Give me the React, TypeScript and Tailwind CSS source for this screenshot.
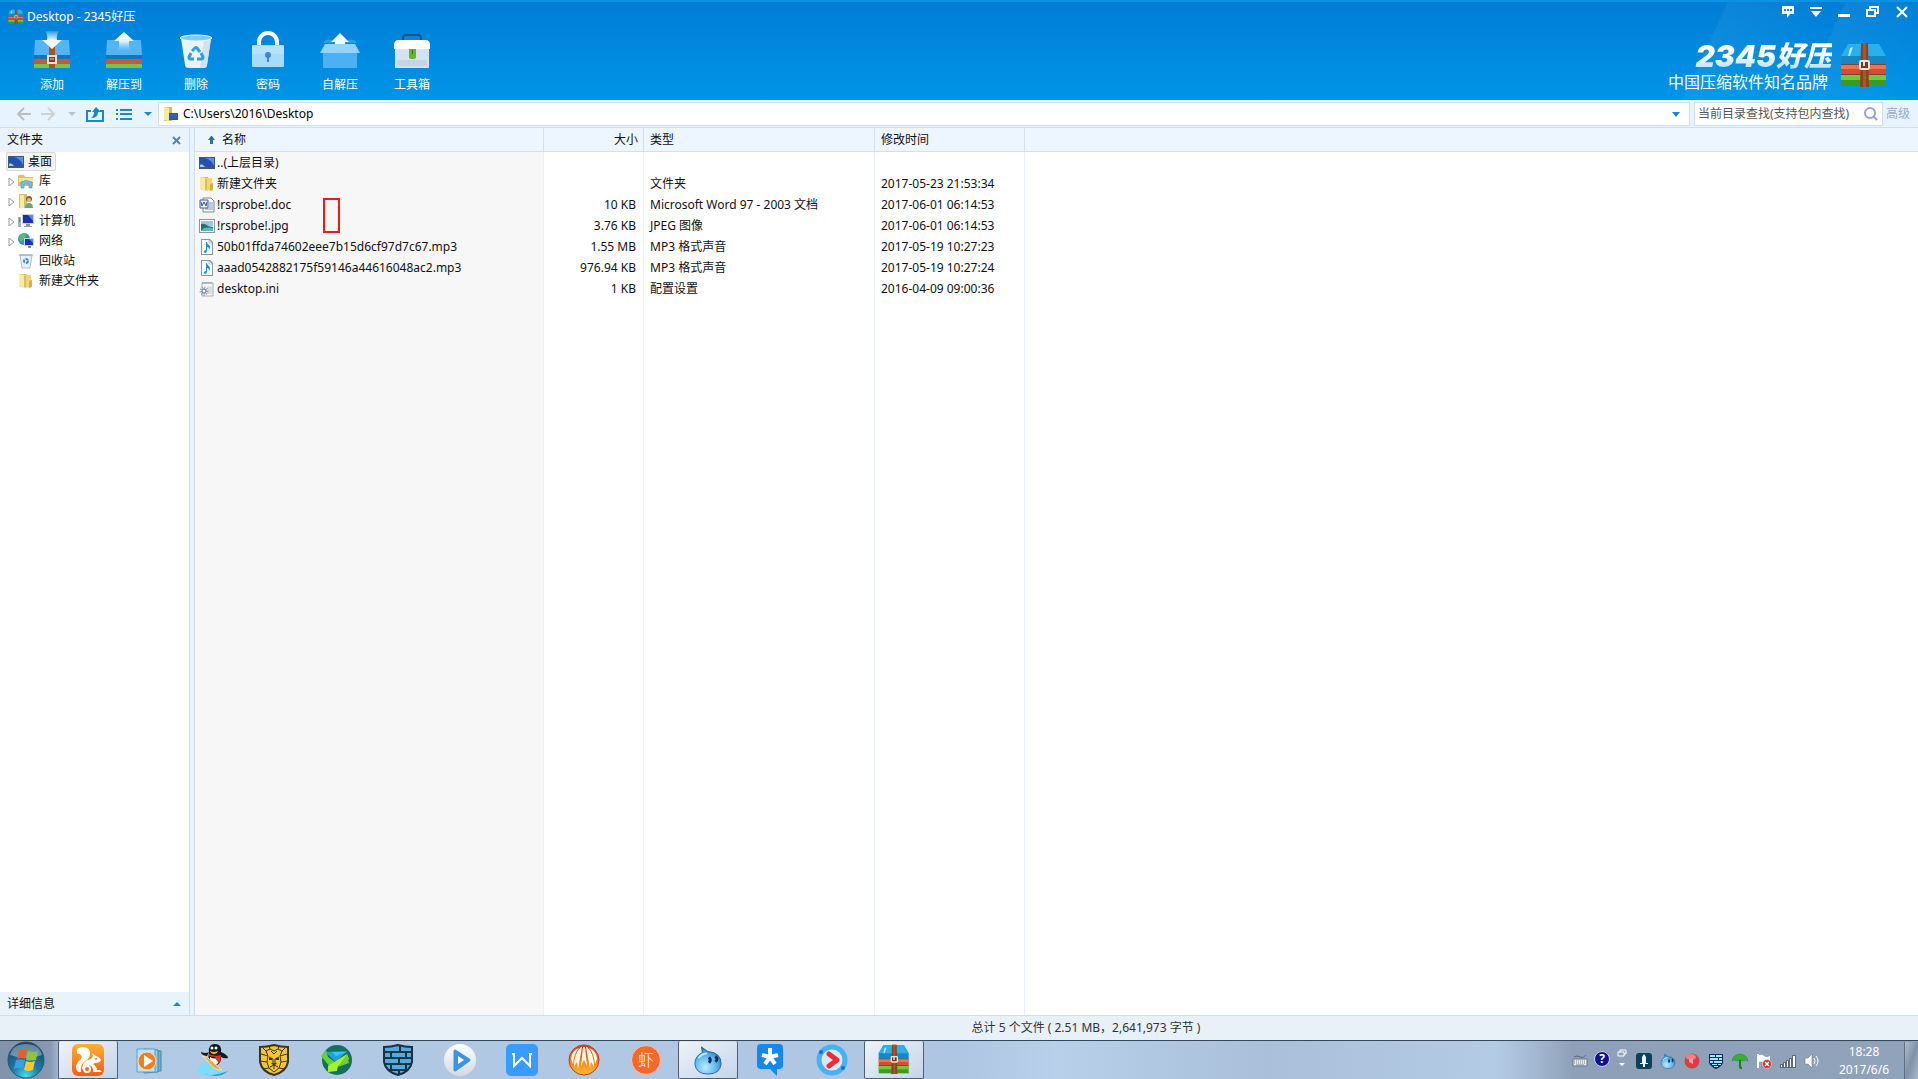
import { useState } from 'react'
import type { ReactNode } from 'react'

/* ---------- Toolbar icons ---------- */

function AddIcon() {
  return (
    <svg width="38" height="40" viewBox="0 0 38 40">
      <defs>
        <linearGradient id="addArrow" x1="0" y1="0" x2="0" y2="1">
          <stop offset="0" stopColor="#fff" stopOpacity="0.15" />
          <stop offset="0.5" stopColor="#e8f6ff" />
          <stop offset="1" stopColor="#fff" />
        </linearGradient>
      </defs>
      <path d="M2 10h34l1 15H1z" fill="#54b4f4" />
      <path d="M1 25h36v4H1z" fill="#0f78bd" />
      <path d="M1 29h36v5H1z" fill="#c7583c" />
      <path d="M1 34h36v4H1z" fill="#7fc241" />
      <path d="M16 16h6v22h-6z" fill="#a9531d" />
      <path d="M15 26h8v7h-8z" fill="#7d3c1c" stroke="#e5e1dc" strokeWidth="2" />
      <path d="M17 29h4" stroke="#e5e1dc" />
      <path d="M12 1h14q-3 4-2 9h5L19 19 9 10h5q1-5-2-9z" fill="url(#addArrow)" />
    </svg>
  )
}

function ExtractIcon() {
  return (
    <svg width="38" height="40" viewBox="0 0 38 40">
      <defs>
        <linearGradient id="extArrow" x1="0" y1="0" x2="0" y2="1">
          <stop offset="0" stopColor="#fff" />
          <stop offset="0.5" stopColor="#dff2ff" />
          <stop offset="1" stopColor="#8fd0fa" stopOpacity="0" />
        </linearGradient>
      </defs>
      <path d="M2 10h34l1 15H1z" fill="#54b4f4" />
      <path d="M1 25h36v4H1z" fill="#0f78bd" />
      <path d="M1 29h36v5H1z" fill="#c7583c" />
      <path d="M1 34h36v4H1z" fill="#7fc241" />
      <path d="M19 2l10 9h-5v4q0 4 3 6H11q3-2 3-6v-4H9z" fill="url(#extArrow)" />
    </svg>
  )
}

function DeleteIcon() {
  return (
    <svg width="38" height="40" viewBox="0 0 38 40">
      <path d="M4 8h30l-4 27q0 3-4 3H12q-4 0-4-3z" fill="#e9f3fa" />
      <path d="M27 9h7l-4 26q0 3-4 3h-3z" fill="#d3e2ed" />
      <ellipse cx="19" cy="8" rx="16" ry="3" fill="#7fcdf5" stroke="#eaf7ff" />
      <g fill="none" stroke="#2e9fe2" strokeWidth="3">
        <path d="M15 21l3-3q1-1 2 0l3 4" />
        <path d="M24 23l2 4q0 2-2 2h-4" />
        <path d="M14 23l-2 4q0 2 2 2h3" />
      </g>
    </svg>
  )
}

function LockIcon() {
  return (
    <svg width="38" height="40" viewBox="0 0 38 40">
      <path d="M10 17v-5a9 9 0 0 1 18 0v5" fill="none" stroke="#fff" strokeWidth="4" />
      <rect x="3" y="15" width="32" height="22" rx="1" fill="#a6dbfb" />
      <path d="M3 16h32v8H3z" fill="#b7e2fc" />
      <circle cx="19" cy="25" r="3" fill="#3f86cf" />
      <path d="M18 26h2v6h-2z" fill="#3f86cf" />
    </svg>
  )
}

function SfxIcon() {
  return (
    <svg width="40" height="40" viewBox="0 0 40 40">
      <path d="M3 13q3-5 9-3h16q6-2 9 3z" fill="#2d9de6" />
      <path d="M20 3l9 9h-4v6H15v-6h-4z" fill="#f2faff" />
      <path d="M3 22h34v16H3z" fill="#4cb0f3" />
      <path d="M5 14h30l5 9H0z" fill="#95d3fb" />
    </svg>
  )
}

function ToolboxIcon() {
  return (
    <svg width="38" height="40" viewBox="0 0 38 40">
      <path d="M10 11V8q0-3 3-3h12q3 0 3 3v3" fill="none" stroke="#20558a" strokeWidth="2" />
      <path d="M2 18h34v20H2z" fill="#d5e2f2" />
      <path d="M1 19v-4q0-5 5-5h26q5 0 5 5v4z" fill="#fff" />
      <path d="M4 31h30M4 33h30M4 35h30" stroke="#b3c5da" />
      <path d="M16 19h7v8q0 2-2 2h-3q-2 0-2-2z" fill="#67b32e" />
      <path d="M19 20h1v4h-1z" fill="#35701a" />
    </svg>
  )
}

function ArchiveIcon({ size }: { size: number }) {
  return (
    <svg width={size} height={size} viewBox="0 0 48 48">
      <path d="M8 2h31l7 12v9H1v-9z" fill="#1787c4" />
      <path d="M8 2h31l7 12H1z" fill="#29b0ee" />
      <path d="M1 23h45v10H1z" fill="#d64c2e" />
      <path d="M1 23h45v4H1z" fill="#f07350" />
      <path d="M1 33h45v11H1z" fill="#3c9a24" />
      <path d="M1 33h45v5H1z" fill="#72c83a" />
      <path d="M1 32h45v1H1zM1 22h45v1H1z" fill="#7a4334" />
      <path d="M21 1h7l1 44h-9z" fill="#8c4320" />
      <path d="M23 1h3v44h-3z" fill="#a9562c" />
      <rect x="20" y="19" width="9" height="8" rx="1" fill="#7a3818" stroke="#e9e4dc" strokeWidth="2" />
      <path d="M24 19v5" stroke="#e9e4dc" strokeWidth="2" />
      <path d="M10 6l3-1-3 9H8z" fill="#b6e8fd" />
    </svg>
  )
}

/* ---------- File icons, 16px ---------- */

function DesktopIcon() {
  return (
    <svg width="16" height="14" viewBox="0 0 16 14">
      <path d="M0 1h16v12H0z" fill="#3e5876" />
      <path d="M1 2h14v9H1z" fill="#2450ae" />
      <path d="M6 2h9v8Q13 4 6 2z" fill="#5a8de6" />
      <path d="M1 9q2-2 5 2H1z" fill="#a9c9ea" />
    </svg>
  )
}

function FolderIcon() {
  return (
    <svg width="16" height="16" viewBox="0 0 16 16">
      <path d="M2 1h7v13H2z" fill="#d9bb56" />
      <path d="M6 2l7 0v12l-7 1z" fill="#edd578" />
      <path d="M1 1l5 1v13l-5-2z" fill="#f8e9a4" />
      <path d="M7 3v11" stroke="#c9a640" />
      <path d="M11 8l3-1v7l-3 1z" fill="#d5b044" />
    </svg>
  )
}

function LibraryIcon() {
  return (
    <svg width="16" height="16" viewBox="0 0 16 16">
      <path d="M0 3l1-1h5l1 2h8v9H0z" fill="#dfc25a" />
      <path d="M1 5h14v4H1z" fill="#f7e59a" />
      <path d="M3 9q5-3 11 0v6h-3v-4H6v4H3z" fill="#6cc3ea" stroke="#3f8fbf" strokeWidth="0.6" />
    </svg>
  )
}

function UserFolderIcon() {
  return (
    <svg width="16" height="16" viewBox="0 0 16 16">
      <path d="M1 1h8v14H1z" fill="#dcc066" />
      <path d="M2 2h4v13H2z" fill="#f8e9a4" />
      <circle cx="11" cy="6" r="3" fill="#7d5a3a" />
      <circle cx="11" cy="7" r="2" fill="#e7b98e" />
      <path d="M7 15q0-5 4-5t4 5z" fill="#68a67c" />
    </svg>
  )
}

function ComputerIcon() {
  return (
    <svg width="16" height="16" viewBox="0 0 16 16">
      <path d="M0 4h3v10H0z" fill="#a9b2ba" />
      <path d="M1 5h1v4H1z" fill="#5d9c4a" />
      <path d="M4 1h12v10H4z" fill="#cdd3da" />
      <path d="M5 2h10v8H5z" fill="#1a2fb4" />
      <path d="M10 2h5v6z" fill="#5f86f0" />
      <path d="M8 11h4v2h2v1H6v-1h2z" fill="#8e98a3" />
    </svg>
  )
}

function NetworkIcon() {
  return (
    <svg width="16" height="16" viewBox="0 0 16 16">
      <circle cx="6" cy="6" r="6" fill="#2f8fd6" />
      <path d="M2 2q4-3 6 0L6 6l-3 3-2-3zM7 7h3l-2 4z" fill="#55c06a" />
      <path d="M6 5h10v8H6z" fill="#c8d4e2" />
      <path d="M7 6h8v6H7z" fill="#1632b5" />
      <path d="M11 6h4v4z" fill="#5a88ef" />
      <path d="M10 13h3v2h-3z" fill="#7f8a96" />
    </svg>
  )
}

function RecycleIcon() {
  return (
    <svg width="16" height="16" viewBox="0 0 16 16">
      <path d="M2 2h12l-2 13H4z" fill="#e6f0f7" stroke="#a9bccb" />
      <path d="M1 2h14" stroke="#93aabd" />
      <circle cx="8" cy="8" r="2" fill="none" stroke="#3b8ed6" strokeWidth="2" strokeDasharray="3 1" />
    </svg>
  )
}

function WordIcon() {
  return (
    <svg width="16" height="16" viewBox="0 0 16 16">
      <path d="M4 1h8l3 3v11H4z" fill="#fff" stroke="#7b8697" />
      <path d="M10 6h4M10 8h4M10 10h4M6 12h8" stroke="#7e93c8" />
      <path d="M1 3h8v8H1z" fill="#eef2fb" stroke="#3d5ba9" />
      <path d="M2 5l1 4 2-4 2 4 1-4" fill="none" stroke="#2f4f9f" />
    </svg>
  )
}

function ImageIcon() {
  return (
    <svg width="16" height="14" viewBox="0 0 16 14">
      <path d="M0 0h16v14H0z" fill="#8c969e" />
      <path d="M1 1h14v12H1z" fill="#fff" />
      <path d="M2 2h12v5H2z" fill="#8ccbee" />
      <path d="M2 5q4-1 7 2l5 1v4H2z" fill="#27736c" />
      <path d="M5 9q5-1 9 0v3H2z" fill="#5fb5c9" />
    </svg>
  )
}

function MusicIcon() {
  return (
    <svg width="16" height="16" viewBox="0 0 16 16">
      <path d="M2 0h9l3 3v13H2z" fill="#8b959d" />
      <path d="M3 1h7l3 3v11H3z" fill="#fff" />
      <path d="M10 1v3h3" fill="none" stroke="#b8c0c6" />
      <path d="M7 3h1q0 2 2 3 2 2 0 5 0-3-2-3v3q0 3-2 3-2-1-1-2t2-1z" fill="#1c8fdc" />
    </svg>
  )
}

function IniIcon() {
  return (
    <svg width="16" height="16" viewBox="0 0 16 16">
      <path d="M3 2h11v13H3z" fill="#f8f9fa" stroke="#a3acb3" />
      <path d="M4 1v2M6 1v2M8 1v2M10 1v2M12 1v2" stroke="#8f989f" />
      <path d="M8 6h5M9 8h4M9 10h4M8 12h5" stroke="#bcc6cd" />
      <circle cx="5" cy="10" r="3" fill="#dfe7ed" stroke="#8fa1b0" strokeWidth="3" strokeDasharray="1 1" />
      <circle cx="5" cy="10" r="2" fill="#eef3f6" stroke="#63798c" />
    </svg>
  )
}

/* ---------- Taskbar icons ---------- */

function StartOrb() {
  return (
    <svg width="38" height="38" viewBox="0 0 38 38">
      <defs>
        <radialGradient id="orb" cx="0.5" cy="0.95" r="0.9">
          <stop offset="0" stopColor="#3fe0f5" />
          <stop offset="0.4" stopColor="#1a7fb0" />
          <stop offset="1" stopColor="#1b4468" />
        </radialGradient>
      </defs>
      <circle cx="19" cy="19" r="18" fill="url(#orb)" stroke="#2a5674" />
      <path d="M3 14Q6 3 19 3t16 11q-16 6-32 0z" fill="#fff" opacity="0.35" />
      <path d="M12 9q4-2 8 0l-2 9q-4-2-8 0z" fill="#ee5b2b" />
      <path d="M21 10q5 2 10 0l-2 9q-6 1-10 0z" fill="#8cc63e" />
      <path d="M9 19q5-1 9 0l-2 9q-5-2-9 0z" fill="#3aa0e6" />
      <path d="M19 20q4 2 9 0l-2 9q-5 2-9 0z" fill="#fbc72e" />
    </svg>
  )
}

function SquirrelIcon() {
  return (
    <svg width="32" height="32" viewBox="0 0 32 32">
      <defs>
        <linearGradient id="uc" x1="0" y1="0" x2="0" y2="1">
          <stop offset="0" stopColor="#ffb12e" />
          <stop offset="1" stopColor="#fb5a14" />
        </linearGradient>
      </defs>
      <rect width="32" height="32" rx="6" fill="url(#uc)" />
      <path d="M9 28H6Q2 23 6 18q3-3 0-7Q2 4 10 3q9 0 8 8-1 4-5 6-5 4-4 11z" fill="#fff" />
      <path d="M4 10q3-1 5 1 2 3-2 6 1-3-3-7z" fill="#fd9226" />
      <path d="M10 24q1-8 9-9l2-3-1-3 4 3q4 1 5 4-1 3-6 3l-2 1q4 3 4 6h3l2 2h-9q1-7-6-7-4 0-4 5z" fill="#fff" />
      <circle cx="15" cy="25" r="3" fill="none" stroke="#fff" strokeWidth="2" />
      <circle cx="24" cy="15" r="1" fill="#fd8424" />
    </svg>
  )
}

function MediaPlayerIcon() {
  return (
    <svg width="32" height="32" viewBox="0 0 32 32">
      <path d="M14 6l13 1v20l-13 1z" fill="#6db0d4" stroke="#4686ab" />
      <path d="M10 5l14 1v22l-14 1z" fill="#96cbe6" stroke="#4686ab" />
      <path d="M3 5h18v23H3z" fill="#bfe2f3" stroke="#5c9fc4" />
      <circle cx="13" cy="17" r="9" fill="#f07f22" stroke="#fbdcb8" />
      <path d="M10 11l9 6-9 6z" fill="#fff" />
    </svg>
  )
}

function PenguinIcon() {
  return (
    <svg width="34" height="34" viewBox="0 0 34 34">
      <path d="M2 28q3-11 14-9l3 6 10 4q-7 5-16 4Q5 33 2 28z" fill="#7fdcf6" />
      <path d="M9 31q8 3 24-3-5 5-13 5z" fill="#1aa5e6" />
      <path d="M12 13q-6-1-6-4 5 2 8 0z" fill="#181818" />
      <path d="M14 9q-1-8 6-8t6 8q7 3 7 6-4 1-7-1 0 10-9 8-5-4-3-13z" fill="#181818" />
      <path d="M15 14q5 3 9 0 1 8-5 8-5-2-4-8z" fill="#fff" />
      <path d="M14 11q6 3 12 1l-1 8q-4-2-5-6l-6-1z" fill="#e23023" />
      <path d="M15 8q4 2 8 0-1 3-4 3t-4-3z" fill="#f9b52a" />
      <circle cx="17" cy="5" r="1.500" fill="#fff" />
      <circle cx="21" cy="5" r="1.500" fill="#fff" />
      <path d="M7 13q5 0 11 6t9 8q-8 0-12-6T7 13z" fill="#f3a33a" stroke="#fbe0a5" />
    </svg>
  )
}

function LionShieldIcon() {
  return (
    <svg width="32" height="34" viewBox="0 0 32 34">
      <path d="M2 4q7 0 14-2 7 2 14 2v15q-2 10-14 13Q4 29 2 19z" fill="#f6c431" stroke="#3a3420" strokeWidth="2" />
      <g fill="none" stroke="#3a3420">
        <path d="M8 8l2 5-1 6 2 6 5 4 5-4 2-6-1-6 2-5-4-2-4 2-4-2z" />
        <path d="M8 8L5 5M12 6l-1-3M20 6l1-3M24 8l3-3M10 13l-7-2M22 13l7-2M9 19l-7-1M23 19l7-1M11 25l-6 1M21 25l6 1" />
        <path d="M13 8l3 3 3-3M11 14l4 2v5M21 14l-4 2v5M12 24l4-2 4 2M16 23v3" />
      </g>
      <path d="M13 20h6l-3 3z" fill="#3a3420" />
      <path d="M11 16h3M18 16h3" stroke="#3a3420" strokeWidth="2" />
    </svg>
  )
}

function GreenBoltIcon() {
  return (
    <svg width="32" height="32" viewBox="0 0 32 32">
      <circle cx="17" cy="16" r="15" fill="#12705e" />
      <path d="M5 8l22-1-11 11z" fill="#1fa0e0" />
      <path d="M12 8h15l-11 4z" fill="#3cc4f2" />
      <path d="M1 12l5-6 2 7 7 5-5 5z" fill="#5fd633" />
      <path d="M8 22l19-12 2 5-11 7-1 5-9 1z" fill="#a5ee34" />
      <path d="M27 10l2 9-11 4z" fill="#72cf28" />
    </svg>
  )
}

function BrickShieldIcon({ size = 32, dark = '#1e2f3d', light = '#4aaee0' }) {
  return (
    <svg width={size} height={size} viewBox="0 0 32 32">
      <path d="M2 3q7 0 14-2 7 2 14 2v15q-2 10-14 13Q4 28 2 18z" fill={light} stroke={dark} strokeWidth="2" />
      <path d="M3 8h26M3 14h26M3 20h26M7 26h18M18 2v6M9 8v6M24 8v6M17 14v6M9 20v6M24 20v5M17 26v4" stroke={dark} strokeWidth="2" />
    </svg>
  )
}

function PlayerIcon() {
  return (
    <svg width="32" height="32" viewBox="0 0 32 32">
      <defs>
        <linearGradient id="disc" x1="0" y1="0" x2="0" y2="1">
          <stop offset="0" stopColor="#fdfefe" />
          <stop offset="1" stopColor="#d3dadf" />
        </linearGradient>
      </defs>
      <circle cx="16" cy="16" r="16" fill="url(#disc)" />
      <path d="M11 7l14 9-14 10z" fill="#3a94e8" stroke="#3a94e8" strokeWidth="3" strokeLinejoin="round" />
      <path d="M14 12l6 4-6 4z" fill="#fff" />
    </svg>
  )
}

function WpsIcon() {
  return (
    <svg width="32" height="32" viewBox="0 0 32 32">
      <rect width="32" height="32" rx="5" fill="#3a9bff" />
      <path d="M6 10h2v12l8-8 8 8V10h2" fill="none" stroke="#fff" strokeWidth="2" />
    </svg>
  )
}

function ShellIcon() {
  return (
    <svg width="32" height="32" viewBox="0 0 32 32">
      <defs>
        <linearGradient id="shell" x1="0" y1="0" x2="0" y2="1">
          <stop offset="0" stopColor="#d63c1c" />
          <stop offset="0.6" stopColor="#f38a1e" />
          <stop offset="1" stopColor="#fbc12e" />
        </linearGradient>
      </defs>
      <circle cx="16" cy="16" r="15" fill="url(#shell)" stroke="#c43a1a" />
      <path d="M16 3l1 0 2 19-3-6-3 6 2-19zM13 3l1 0-4 22-1-7-3 5Q6 9 13 3zM19 3l-1 0 4 22 1-7 3 5Q26 9 19 3zM11 4Q6 9 5 20l-2-5Q3 7 11 4zM21 4q5 5 6 16l2-5Q29 7 21 4z" fill="#fff6e6" />
    </svg>
  )
}

function XiamiIcon() {
  return (
    <span className="flex size-[30px] items-center justify-center rounded-full border border-[#f9c3a6] bg-[#f8682c] text-base leading-none font-light text-white">
      虾
    </span>
  )
}

function DropletIcon({ size }: { size: number }) {
  return (
    <svg width={size} height={size} viewBox="0 0 32 32">
      <defs>
        <radialGradient id="drop" cx="0.4" cy="0.75" r="0.7">
          <stop offset="0" stopColor="#bdeaff" />
          <stop offset="0.6" stopColor="#5db8f0" />
          <stop offset="1" stopColor="#2577c4" />
        </radialGradient>
      </defs>
      <path d="M9 2q4 3 7 5 14 1 14 13-1 11-14 11T2 20Q2 12 10 8z" fill="url(#drop)" stroke="#2468a8" />
      <path d="M6 14q3-5 9-5" fill="none" stroke="#e8f8ff" strokeWidth="2" opacity="0.8" />
      <path d="M17 13q3 3 0 6M24 12q3 3 0 6" fill="none" stroke="#10304f" strokeWidth="3" />
    </svg>
  )
}

function StarBubbleIcon() {
  return (
    <svg width="32" height="34" viewBox="0 0 32 34">
      <path d="M7 1h18q4 0 4 4v17q0 4-4 4h-2v7l-7-7H7q-4 0-4-4V5q0-4 4-4z" fill="#1488ef" />
      <path d="M16 5v9l-8-2M16 14l8-2M16 14l-5 7M16 14l5 7" stroke="#fff" strokeWidth="4" fill="none" />
    </svg>
  )
}

function VideoIcon() {
  return (
    <svg width="32" height="32" viewBox="0 0 32 32">
      <circle cx="16" cy="16" r="13" fill="#dbe8f3" stroke="#45b2f5" strokeWidth="5" />
      <circle cx="5" cy="8" r="2" fill="#1472c4" />
      <circle cx="27" cy="24" r="2" fill="#1472c4" />
      <path d="M13 10l8 6-8 6" fill="none" stroke="#ee2b36" strokeWidth="5" strokeLinecap="round" strokeLinejoin="round" />
    </svg>
  )
}

/* ---------- Tray icons ---------- */

function KeyboardIcon() {
  return (
    <svg width="16" height="16" viewBox="0 0 16 16">
      <path d="M2 4q3-2 6 0t6-2" fill="none" stroke="#5f6c7b" />
      <path d="M1 6h14v7H1z" fill="#e6e9ec" stroke="#6a7683" />
      <path d="M2 8h12M2 10h12" stroke="#7a8692" strokeDasharray="1 1" />
      <path d="M4 12h8" stroke="#7a8692" />
    </svg>
  )
}

function HelpIcon() {
  return (
    <span className="flex size-4 items-center justify-center rounded-full border border-[#c9d2ea] bg-[#10128e] text-xs leading-none font-bold text-white">
      ?
    </span>
  )
}

function RestoreStack() {
  return (
    <svg width="10" height="20" viewBox="0 0 10 20">
      <path d="M3 3V1h6v4H7M1 3h6v4H1z" fill="none" stroke="#fff" />
      <path d="M2 14h6l-3 3z" fill="#fff" />
    </svg>
  )
}

function DaggerIcon() {
  return (
    <svg width="16" height="16" viewBox="0 0 16 16">
      <rect width="16" height="16" rx="3" fill="#0c405c" />
      <path d="M8 1l2 3v6h2v1H9v3H7v-3H4v-1h2V4z" fill="#e8f5fb" />
    </svg>
  )
}

function RedBallIcon() {
  return (
    <svg width="16" height="16" viewBox="0 0 16 16">
      <circle cx="8" cy="8" r="7.500" fill="#e23a42" />
      <ellipse cx="7" cy="4" rx="5" ry="3" fill="#f28086" />
      <path d="M5 7l4-2v6L5 9z" fill="#f4a5a8" />
    </svg>
  )
}

function SmallShieldIcon() {
  return (
    <svg width="16" height="16" viewBox="0 0 16 16">
      <path d="M1 1h14v9q-2 4-7 6-5-2-7-6z" fill="#102a6c" />
      <path d="M2 2h5v2H2zM8 2h6v2H8zM2 5h8v2H2zM11 5h3v2h-3zM2 8h3v2H2zM6 8h8v2H6zM4 11h5v1H4zM10 11h3v1h-3zM6 13h4v1H6z" fill="#9fe8fb" />
    </svg>
  )
}

function UmbrellaIcon() {
  return (
    <svg width="16" height="16" viewBox="0 0 16 16">
      <path d="M0 8q1-6 8-7 7 1 8 7-3-2-5 0-3-2-6 0-2-2-5 0z" fill="#32b52c" stroke="#1a7d1d" strokeWidth="0.500" />
      <path d="M8 7v7q0 1 2 1" fill="none" stroke="#1a7d1d" strokeWidth="2" />
    </svg>
  )
}

function FlagIcon() {
  return (
    <svg width="16" height="16" viewBox="0 0 16 16">
      <path d="M2 1v14" stroke="#fff" strokeWidth="2" />
      <path d="M3 2q3-1 5 1t6 0v6q-3 1-6 0T3 9z" fill="#fff" />
      <circle cx="11" cy="11" r="4.500" fill="#d9322a" stroke="#fff" strokeWidth="0.500" />
      <path d="M9 9l4 4M13 9l-4 4" stroke="#fff" strokeWidth="1.500" />
    </svg>
  )
}

function SignalIcon() {
  return (
    <svg width="16" height="16" viewBox="0 0 16 16">
      <path d="M0 11h3v4H0zM3 9h3v6H3zM6 7h3v8H6zM9 5h3v10H9zM12 2h4v13h-4z" fill="#5a6a7d" />
      <path d="M1 12h1v2H1zM4 10h1v4H4zM7 8h1v6H7zM10 6h1v8h-1zM13 3h2v11h-2z" fill="#fff" />
    </svg>
  )
}

function VolumeIcon() {
  return (
    <svg width="16" height="16" viewBox="0 0 16 16">
      <path d="M1 5h3l4-4v14l-4-4H1z" fill="#fff" stroke="#5d6d80" strokeWidth="0.500" />
      <path d="M10 5q2 3 0 6M12 3q4 5 0 10" fill="none" stroke="#fff" />
    </svg>
  )
}

/* ---------- Data ---------- */

const tools = [
  { label: '添加', icon: <AddIcon /> },
  { label: '解压到', icon: <ExtractIcon /> },
  { label: '删除', icon: <DeleteIcon /> },
  { label: '密码', icon: <LockIcon /> },
  { label: '自解压', icon: <SfxIcon /> },
  { label: '工具箱', icon: <ToolboxIcon /> },
]

const folders = [
  { label: '库', icon: <LibraryIcon />, expandable: true },
  { label: '2016', icon: <UserFolderIcon />, expandable: true },
  { label: '计算机', icon: <ComputerIcon />, expandable: true },
  { label: '网络', icon: <NetworkIcon />, expandable: true },
  { label: '回收站', icon: <RecycleIcon />, expandable: false },
  { label: '新建文件夹', icon: <FolderIcon />, expandable: false },
]

const files = [
  { name: '..(上层目录)', icon: <DesktopIcon />, size: '', type: '', date: '' },
  { name: '新建文件夹', icon: <FolderIcon />, size: '', type: '文件夹', date: '2017-05-23 21:53:34' },
  { name: '!rsprobe!.doc', icon: <WordIcon />, size: '10 KB', type: 'Microsoft Word 97 - 2003 文档', date: '2017-06-01 06:14:53' },
  { name: '!rsprobe!.jpg', icon: <ImageIcon />, size: '3.76 KB', type: 'JPEG 图像', date: '2017-06-01 06:14:53' },
  { name: '50b01ffda74602eee7b15d6cf97d7c67.mp3', icon: <MusicIcon />, size: '1.55 MB', type: 'MP3 格式声音', date: '2017-05-19 10:27:23' },
  { name: 'aaad0542882175f59146a44616048ac2.mp3', icon: <MusicIcon />, size: '976.94 KB', type: 'MP3 格式声音', date: '2017-05-19 10:27:24' },
  { name: 'desktop.ini', icon: <IniIcon />, size: '1 KB', type: '配置设置', date: '2016-04-09 09:00:36' },
]

const apps = [
  { name: 'UC', icon: <SquirrelIcon />, open: true },
  { name: 'Media Player', icon: <MediaPlayerIcon />, open: false },
  { name: 'QQ', icon: <PenguinIcon />, open: false },
  { name: 'Lion', icon: <LionShieldIcon />, open: false },
  { name: 'Bolt', icon: <GreenBoltIcon />, open: false },
  { name: 'Firewall', icon: <BrickShieldIcon />, open: false },
  { name: 'Player', icon: <PlayerIcon />, open: false },
  { name: 'WPS', icon: <WpsIcon />, open: false },
  { name: 'Shell', icon: <ShellIcon />, open: false },
  { name: 'Xiami', icon: <XiamiIcon />, open: false },
  { name: 'Wangwang', icon: <DropletIcon size={30} />, open: true },
  { name: 'Star', icon: <StarBubbleIcon />, open: false },
  { name: 'Video', icon: <VideoIcon />, open: false },
  { name: '2345', icon: <ArchiveIcon size={32} />, open: true },
]

const tray = [
  { name: 'Dagger', icon: <DaggerIcon /> },
  { name: 'Wangwang', icon: <DropletIcon size={16} /> },
  { name: 'Record', icon: <RedBallIcon /> },
  { name: 'Firewall', icon: <SmallShieldIcon /> },
  { name: 'Umbrella', icon: <UmbrellaIcon /> },
  { name: 'Action center', icon: <FlagIcon /> },
  { name: 'Network', icon: <SignalIcon /> },
  { name: 'Volume', icon: <VolumeIcon /> },
]

/* ---------- Parts ---------- */

function IconButton({ label, className, children }: { label: string; className: string; children: ReactNode }) {
  return (
    <button type="button" aria-label={label} className={`flex items-center justify-center ${className}`}>
      {children}
    </button>
  )
}

function Header() {
  return (
    <header className="flex h-[100px] shrink-0 justify-between border-t-2 border-[#0a93e3] bg-[linear-gradient(115deg,transparent_88%,#ffffff0d_88%,#ffffff00_94%,#ffffff0d_94%,transparent_99%),linear-gradient(#017dd6,#0095e6)] text-white">
      <div>
        <h1 className="flex h-7 items-center gap-[3px] pt-px pl-2">
          <ArchiveIcon size={16} />
          Desktop - 2345好压
        </h1>
        <div className="flex pl-4">
          {tools.map(tool => (
            <button key={tool.label} type="button" className="flex w-[72px] flex-col items-center gap-1">
              {tool.icon}
              <span className="leading-[22px]">{tool.label}</span>
            </button>
          ))}
        </div>
      </div>
      <div className="flex flex-col items-end">
        <div className="flex h-5 items-center">
          <IconButton label="反馈" className="w-7">
            <svg width="14" height="12" viewBox="0 0 14 12">
              <path d="M1 0h12v8H9l-3 4V8H1z" fill="#fff" />
              <path d="M3 3h2v2H3zM6 3h2v2H6zM9 3h2v2H9z" fill="#0a85dc" />
            </svg>
          </IconButton>
          <IconButton label="菜单" className="w-7">
            <svg width="12" height="10" viewBox="0 0 12 10">
              <path d="M0 0h12v2H0zM1 4h10L6 10z" fill="#fff" />
            </svg>
          </IconButton>
          <IconButton label="最小化" className="w-7">
            <svg width="12" height="10" viewBox="0 0 12 10">
              <path d="M0 7h12v3H0z" fill="#fff" />
            </svg>
          </IconButton>
          <IconButton label="还原" className="w-7">
            <svg width="13" height="12" viewBox="0 0 13 12">
              <path d="M4 4V1h8v6H9M1 4h8v6H1z" fill="none" stroke="#fff" strokeWidth="2" />
            </svg>
          </IconButton>
          <IconButton label="关闭" className="w-8">
            <svg width="12" height="12" viewBox="0 0 12 12">
              <path d="M1 1l10 10M11 1L1 11" stroke="#fff" strokeWidth="2" />
            </svg>
          </IconButton>
        </div>
        <div className="flex items-start gap-2 pt-5 pr-[30px]">
          <div className="flex flex-col items-end">
            <div className="flex h-7 items-center bg-linear-to-b from-white from-40% to-[#b5defa] bg-clip-text font-['Inter','Noto_Sans_CJK_SC',sans-serif] text-[30px] leading-7 font-black text-transparent italic">
              2345
              <span className="text-[28px]">好压</span>
            </div>
            <div className="pr-1 text-base leading-6">中国压缩软件知名品牌</div>
          </div>
          <ArchiveIcon size={48} />
        </div>
      </div>
    </header>
  )
}

function AddressBar() {
  const [path, setPath] = useState('C:\\Users\\2016\\Desktop')
  const [query, setQuery] = useState('')

  return (
    <nav className="flex h-7 shrink-0 items-center border-b border-[#cfdfec] bg-[#e8f4fd] pt-px">
      <div className="flex w-[158px] items-center pl-3">
        <IconButton label="后退" className="w-6">
          <svg width="16" height="14" viewBox="0 0 16 14">
            <path d="M15 7H2M8 1L2 7l6 6" fill="none" stroke="#b9bfc4" strokeWidth="2" />
          </svg>
        </IconButton>
        <IconButton label="前进" className="w-6">
          <svg width="16" height="14" viewBox="0 0 16 14">
            <path d="M1 7h13M8 1l6 6-6 6" fill="none" stroke="#ccd1d5" strokeWidth="2" />
          </svg>
        </IconButton>
        <IconButton label="历史" className="w-6">
          <svg width="8" height="4" viewBox="0 0 8 4">
            <path d="M0 0h8L4 4z" fill="#bcc4ca" />
          </svg>
        </IconButton>
        <IconButton label="向上" className="w-[22px]">
          <svg width="18" height="15" viewBox="0 0 18 15">
            <path d="M5 4H1v10h16V4h-3" fill="none" stroke="#1b87d2" strokeWidth="2" />
            <path d="M10 0l5 5h-3q0 6-7 6 3-2 3-6H6z" fill="#1b87d2" />
          </svg>
        </IconButton>
        <IconButton label="视图" className="w-9">
          <svg width="16" height="11" viewBox="0 0 16 11">
            <path d="M0 0h2v2H0zM4 0h12v2H4zM0 4h2v2H0zM4 4h12v2H4zM0 9h2v2H0zM4 9h12v2H4z" fill="#1b87d2" />
          </svg>
        </IconButton>
        <IconButton label="视图选项" className="w-3">
          <svg width="8" height="4" viewBox="0 0 8 4">
            <path d="M0 0h8L4 4z" fill="#1b87d2" />
          </svg>
        </IconButton>
      </div>
      <div className="flex h-6 flex-1 items-center gap-1 border border-[#cddff0] bg-white pl-1">
        <svg width="16" height="16" viewBox="0 0 16 16">
          <path d="M1 1h8v14H1z" fill="#d9bb56" />
          <path d="M1 1l5 1v13l-5-1z" fill="#f8e9a4" />
          <path d="M6 7h9v7H6z" fill="#3e5876" />
          <path d="M7 8h7v5H7z" fill="#2b62c4" />
        </svg>
        <input
          aria-label="路径"
          value={path}
          onChange={e => setPath(e.target.value)}
          className="min-w-0 flex-1 text-black outline-none"
        />
        <IconButton label="路径列表" className="h-full w-[26px]">
          <svg width="8" height="5" viewBox="0 0 8 5">
            <path d="M0 0h8L4 5z" fill="#1b87d2" />
          </svg>
        </IconButton>
      </div>
      <div className="ml-1 flex h-6 w-[189px] items-center border border-[#cddff0] bg-white pl-[3px]">
        <input
          aria-label="查找"
          value={query}
          onChange={e => setQuery(e.target.value)}
          placeholder="当前目录查找(支持包内查找)"
          className="min-w-0 flex-1 outline-none placeholder:text-[#555]"
        />
        <IconButton label="查找" className="w-[22px]">
          <svg width="14" height="14" viewBox="0 0 14 14">
            <circle cx="6" cy="6" r="5" fill="none" stroke="#8fa3d4" strokeWidth="2" />
            <path d="M9 9l4 4" stroke="#8fa3d4" strokeWidth="2" />
          </svg>
        </IconButton>
      </div>
      <a href="#advanced" className="pr-2 pl-[3px] text-[#93a8d3]">高级</a>
    </nav>
  )
}

function Sidebar() {
  return (
    <aside className="flex w-[190px] shrink-0 flex-col border-r border-[#cddded] bg-white">
      <div className="flex h-6 items-center justify-between bg-[#e8f3fc] pr-[5px] pl-[7px]">
        <h2>文件夹</h2>
        <IconButton label="关闭" className="size-4">
          <svg width="9" height="9" viewBox="0 0 9 9">
            <path d="M1 1l7 7M8 1L1 8" stroke="#5c7fae" strokeWidth="2" />
          </svg>
        </IconButton>
      </div>
      <ul className="flex-1">
        <li className="flex h-[19px] items-center pl-[6px]">
          <button type="button" className="flex h-[19px] items-center gap-1 rounded-xs border border-[#d9d9d9] bg-[#f3f3f3] px-[3px] pl-px">
            <DesktopIcon />
            桌面
          </button>
        </li>
        {folders.map(folder => (
          <li key={folder.label} className="h-5">
            <button type="button" className="flex h-5 items-center pl-2">
              <span className="w-[10px]">
                {folder.expandable && (
                  <svg width="7" height="9" viewBox="0 0 7 9">
                    <path d="M1 1l5 4-5 4z" fill="#fff" stroke="#9a9a9a" />
                  </svg>
                )}
              </span>
              {folder.icon}
              <span className="pl-[5px]">{folder.label}</span>
            </button>
          </li>
        ))}
      </ul>
      <button type="button" className="flex h-[23px] items-center justify-between bg-[#e8f3fc] pr-2 pl-[7px]">
        详细信息
        <svg width="8" height="4" viewBox="0 0 8 4">
          <path d="M0 4h8L4 0z" fill="#1b87d2" />
        </svg>
      </button>
    </aside>
  )
}

function FileTable() {
  return (
    <main className="relative min-w-0 flex-1 border-l border-[#cddded] bg-white">
      <table className="h-full w-full table-fixed border-separate border-spacing-0">
        <colgroup>
          <col className="w-[349px]" />
          <col className="w-[100px]" />
          <col className="w-[231px]" />
          <col className="w-[150px]" />
          <col />
        </colgroup>
        <thead>
          <tr className="h-6 bg-[#edf6ff] text-left *:border-b *:border-[#d3e0ec] *:p-0 *:font-normal">
            <th scope="col" className="border-r">
              <button type="button" className="flex items-center gap-[7px] pl-[13px]">
                <svg width="7" height="8" viewBox="0 0 7 8">
                  <path d="M3 0h1l3 4H5v4H2V4H0z" fill="#2f7098" />
                </svg>
                名称
              </button>
            </th>
            <th scope="col" className="border-r">
              <button type="button" className="w-full pr-[5px] text-right">大小</button>
            </th>
            <th scope="col" className="border-r">
              <button type="button" className="pl-[6px]">类型</button>
            </th>
            <th scope="col" className="border-r">
              <button type="button" className="pl-[6px]">修改时间</button>
            </th>
            <td />
          </tr>
        </thead>
        <tbody>
          {files.map(file => (
            <tr key={file.name} className="h-[21px] *:border-[#e9f0f6] *:p-0">
              <td className="border-r bg-[#f7f7f7]">
                <div className="flex items-center gap-[2px] pl-1">
                  {file.icon}
                  {file.name}
                </div>
              </td>
              <td className="border-r text-right">
                <span className="pr-[7px]">{file.size}</span>
              </td>
              <td className="border-r">
                <span className="pl-[6px]">{file.type}</span>
              </td>
              <td className="border-r">
                <span className="pl-[6px]">{file.date}</span>
              </td>
              <td />
            </tr>
          ))}
          {/* filler keeps the column lines running to the bottom */}
          <tr className="h-full *:border-[#e9f0f6]">
            <td className="border-r bg-[#f7f7f7]" />
            <td className="border-r" />
            <td className="border-r" />
            <td className="border-r" />
            <td />
          </tr>
        </tbody>
      </table>
      <div className="pointer-events-none absolute top-[70px] left-32 h-[35px] w-[17px] border-2 border-[#f01818]" />
    </main>
  )
}

function Taskbar() {
  return (
    <footer className="flex h-[39px] shrink-0 items-stretch overflow-hidden border-t border-[#35485a] bg-[linear-gradient(90deg,#8093ab_0,#8798b0_50px,#b3cae5_64px,#afc6e2_50%,#b8d0ea_55%,#a9bfda_66%,#b4cbe5_78%,#a3b8d1_80%,#8da0b7_82%,#8fa3ba_100%)]">
      <IconButton label="开始" className="w-[52px] shrink-0">
        <StartOrb />
      </IconButton>
      <div className="flex gap-[2px] pl-[6px]">
        {apps.map(app => (
          <IconButton
            key={app.name}
            label={app.name}
            className={app.open ? 'w-[60px] rounded-xs border border-t-0 border-[#4d5f75] bg-linear-to-br from-[#eef3f9] to-[#c5d5e9] inset-shadow-2xs' : 'w-[60px]'}
          >
            {app.icon}
          </IconButton>
        ))}
      </div>
      <div className="ml-auto flex items-center pt-px">
        <IconButton label="输入法" className="w-6"><KeyboardIcon /></IconButton>
        <IconButton label="帮助" className="w-5 pb-1"><HelpIcon /></IconButton>
        <IconButton label="还原语言栏" className="w-5 pb-1"><RestoreStack /></IconButton>
        {tray.map(item => (
          <IconButton key={item.name} label={item.name} className="w-6">{item.icon}</IconButton>
        ))}
        <button type="button" className="w-20 text-center leading-[18px] text-white">
          <time>18:28<br />2017/6/6</time>
        </button>
        <button type="button" aria-label="显示桌面" className="h-full w-[14px] border-l border-[#5d6e82] bg-linear-to-br from-[#b2c0cf] via-[#7f92a8] to-[#a9b9ca]" />
      </div>
    </footer>
  )
}

export default function App() {
  return (
    <div className="flex h-screen flex-col overflow-hidden bg-white font-['Noto_Sans','Noto_Sans_CJK_SC',sans-serif] text-xs text-[#111]">
      <Header />
      <AddressBar />
      <div className="flex min-h-0 flex-1 bg-[#e8f3fc]">
        <Sidebar />
        <div className="w-1 shrink-0" />
        <FileTable />
      </div>
      <div className="flex h-[25px] shrink-0 items-center justify-center border-t border-[#cfdde8] bg-[#e9f1f8] pl-[254px] text-[#333]">
        总计 5 个文件 ( 2.51 MB，2,641,973 字节 )
      </div>
      <Taskbar />
    </div>
  )
}
